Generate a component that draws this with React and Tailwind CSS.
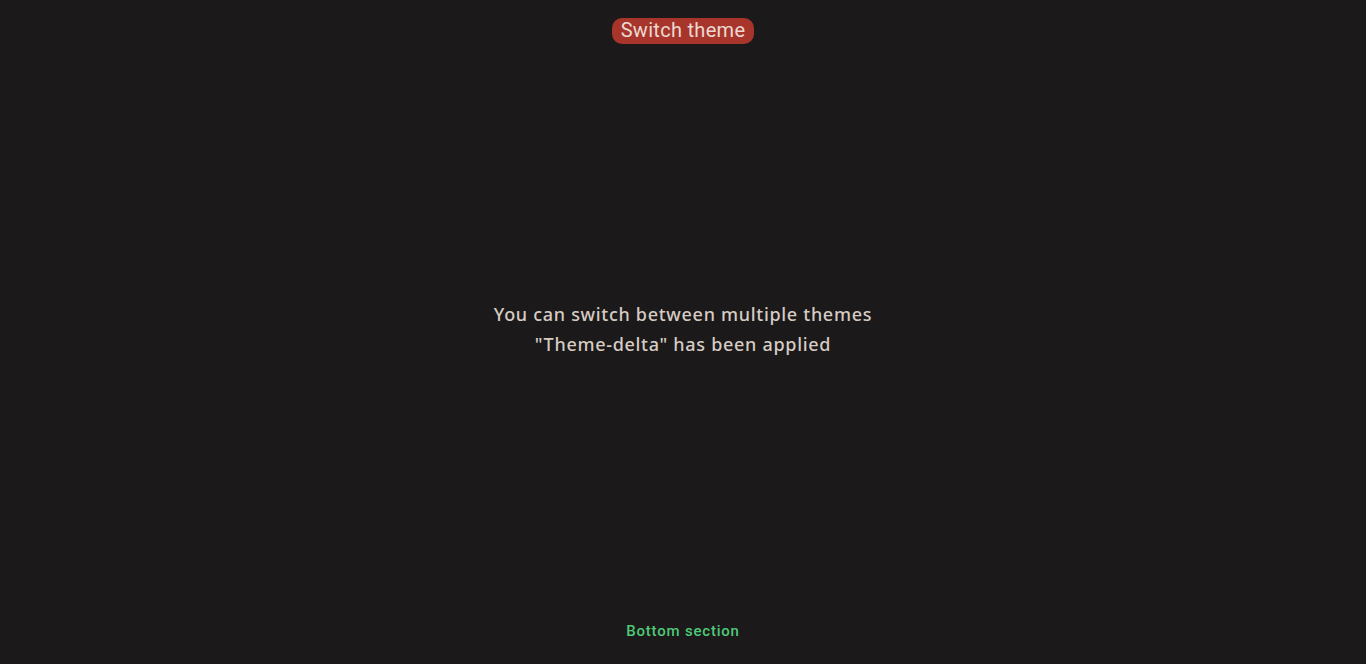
import React from 'react';

export default function App() {
  return (
    <div className="h-screen bg-[#1b191a] flex flex-col items-center justify-between font-['Noto_Sans',sans-serif]">
      <div className="pt-[18px]">
        <button className="h-[26px] px-[9px] pb-[2px] rounded-[10px] bg-[#a8352b] text-[#ecd9d2] text-[20px] leading-[24px] tracking-[0.3px] font-['Roboto',sans-serif]">
          Switch theme
        </button>
      </div>

      <div className="text-center text-[#d6ccc4] text-[18px] leading-[30px] font-medium tracking-[0.7px] mb-[2px]">
        <p>You can switch between multiple themes</p>
        <p>"Theme-delta" has been applied</p>
      </div>

      <div className="pb-[18px] text-[#4fc877] text-[15px] leading-[30px] font-medium tracking-[0.8px] font-['Roboto',sans-serif]">
        Bottom section
      </div>
    </div>
  );
}
